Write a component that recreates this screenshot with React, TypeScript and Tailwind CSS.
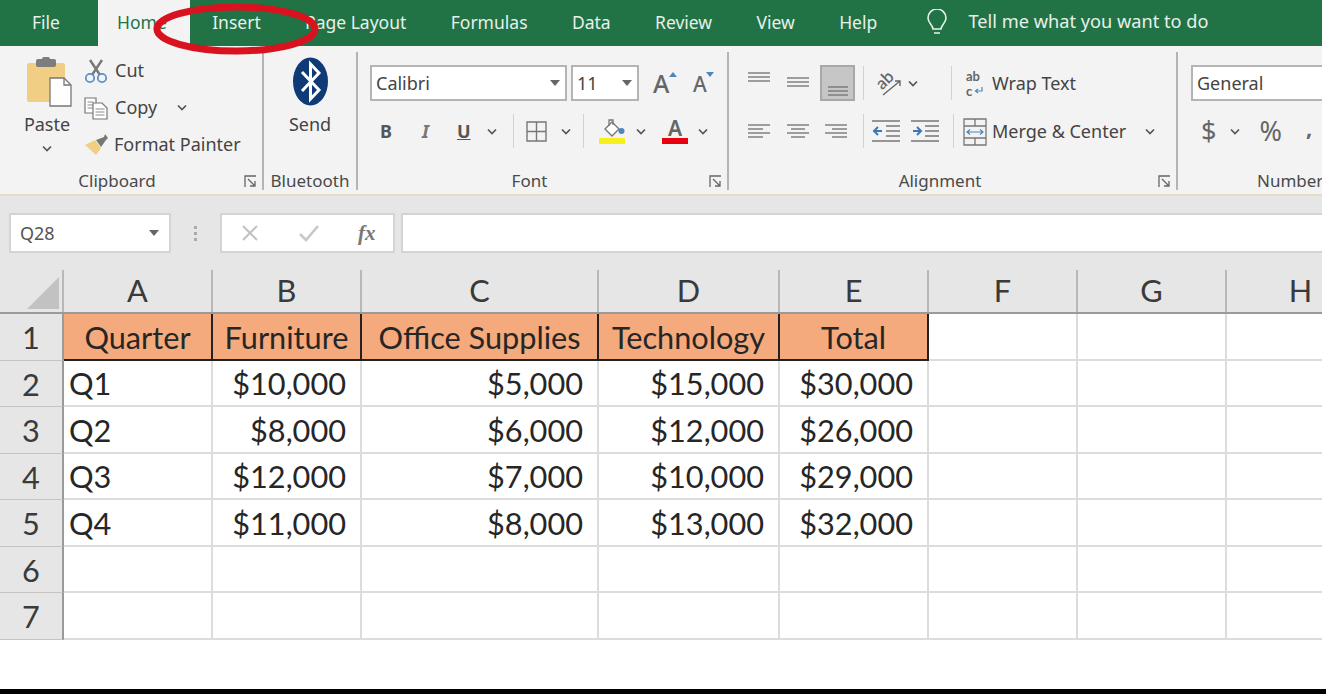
const tabs = ["Insert", "Page Layout", "Formulas", "Data", "Review", "View", "Help"];

const rows = [
  ["Q1", "$10,000", "$5,000", "$15,000", "$30,000"],
  ["Q2", "$8,000", "$6,000", "$12,000", "$26,000"],
  ["Q3", "$12,000", "$7,000", "$10,000", "$29,000"],
  ["Q4", "$11,000", "$8,000", "$13,000", "$32,000"],
];

const gridCols = "grid grid-cols-[64px_149px_149px_237px_181px_149px_149px_149px_149px]";

function Chevron({ className = "" }: { className?: string }) {
  return (
    <svg width="10" height="7" viewBox="0 0 10 7" className={className}>
      <path d="M1 1.5 5 5.5 9 1.5" fill="none" stroke="#555" strokeWidth="1.7" />
    </svg>
  );
}

function Caret() {
  return (
    <svg width="10" height="6" viewBox="0 0 10 6">
      <path d="M0 0h10L5 6z" fill="#666" />
    </svg>
  );
}

function Launcher() {
  return (
    <svg width="13" height="13" viewBox="0 0 13 13">
      <path d="M1 12V1h11M4 4l7 7M11 6v5H6" fill="none" stroke="#666" strokeWidth="1.3" />
    </svg>
  );
}

function Lines({ rows, color = "#777" }: { rows: [number, number, number][]; color?: string }) {
  return (
    <svg width="24" height="24" viewBox="0 0 24 24">
      {rows.map(([x1, x2, y]) => (
        <path key={y} d={`M${x1} ${y}H${x2}`} stroke={color} strokeWidth="1.4" />
      ))}
    </svg>
  );
}

function Group({ width, label, labelClass = "justify-center", launcher, children }: { width: string; label: string; labelClass?: string; launcher?: boolean; children: React.ReactNode }) {
  return (
    <section className={`${width} relative h-[138px] shrink-0 border-r-2 border-[#b4b4b4] flex flex-col`}>
      <div className="flex-1 min-h-0">{children}</div>
      <div className={`flex h-[24px] items-center pt-[6px] text-[17px] text-[#4a4a4a] ${labelClass}`}>{label}</div>
      {launcher && (
        <div className="absolute right-[5px] bottom-[2px] flex">
          <Launcher />
        </div>
      )}
    </section>
  );
}

function Sep() {
  return <div className="mx-[8px] h-[34px] w-px bg-[#d2d2d2]" />;
}

function ClipboardGroup() {
  return (
    <Group width="w-[264px]" label="Clipboard" labelClass="justify-center pr-[28px]" launcher>
      <div className="flex pl-[24px] pt-[5px]">
        <div className="flex w-[46px] flex-col items-center">
          <svg width="46" height="50" viewBox="0 0 46 50" className="ml-[4px]">
            <rect x="1" y="6" width="38" height="39" rx="2" fill="#f0cf85" />
            <rect x="10" y="2" width="20" height="8" rx="2" fill="#7d7d7d" />
            <rect x="16" y="0" width="8" height="5" rx="2" fill="#7d7d7d" />
            <path d="M24 21h14l7 7v21H24z" fill="#fff" stroke="#777" strokeWidth="1.3" />
            <path d="M38 21v7h7" fill="none" stroke="#777" strokeWidth="1.3" />
          </svg>
          <span className="mt-[5px] text-[18px] leading-[24px] text-[#444]">Paste</span>
          <Chevron className="mt-[9px]" />
        </div>
        <div className="-mt-[5px] ml-[14px] flex flex-col text-[18px] leading-[37px] text-[#444]">
          <div className="flex h-[37px] items-center gap-[7px]">
            <svg width="24" height="26" viewBox="0 0 24 26">
              <path d="M6 2l10 15M18 2 8 17" stroke="#777" strokeWidth="2.4" fill="none" />
              <circle cx="6" cy="20" r="4.2" fill="none" stroke="#5b8fc7" strokeWidth="1.8" />
              <circle cx="18" cy="20" r="4.2" fill="none" stroke="#5b8fc7" strokeWidth="1.8" />
            </svg>
            Cut
          </div>
          <div className="flex h-[37px] items-center gap-[6px]">
            <svg width="25" height="24" viewBox="0 0 25 24">
              <path d="M1 2h11v15H1z" fill="#fff" stroke="#777" strokeWidth="1.2" />
              <path d="M3.5 6h6M3.5 9h6M3.5 12h6" stroke="#888" />
              <path d="M9 7h9l5 5v11H9z" fill="#fff" stroke="#777" strokeWidth="1.2" />
              <path d="M11.5 13h9M11.5 16h9M11.5 19h9" stroke="#888" />
            </svg>
            Copy
            <Chevron className="ml-[14px]" />
          </div>
          <div className="flex h-[37px] items-center gap-[5px]">
            <svg width="25" height="22" viewBox="0 0 25 22">
              <path d="M1 11l10-5 6 8-5 7z" fill="#f0cf85" />
              <path d="M12 6l8-3 1-3 3 4-2 2-5 7z" fill="#777" />
            </svg>
            Format Painter
          </div>
        </div>
      </div>
    </Group>
  );
}

function BluetoothGroup() {
  return (
    <Group width="w-[94px]" label="Bluetooth">
      <div className="flex flex-col items-center pt-[5px]">
        <svg width="35" height="49" viewBox="0 0 35 49">
          <ellipse cx="17.5" cy="24.5" rx="17.5" ry="24" fill="#0e3a75" />
          <path d="M9 15l17 18-8.5 9V7L26 16 9 34" fill="none" stroke="#fff" strokeWidth="3" />
        </svg>
        <span className="mt-[6px] text-[18px] leading-[24px] text-[#444]">Send</span>
      </div>
    </Group>
  );
}

function FontGroup() {
  return (
    <Group width="w-[371px]" label="Font" labelClass="justify-center pr-[26px]" launcher>
      <div className="flex flex-col pl-[12px] pt-[13px]">
        <div className="flex h-[36px] items-center">
          <div className="flex h-[36px] w-[197px] items-center justify-between border-2 border-[#b4b4b4] bg-white pl-[4px] pr-[5px] text-[18px] text-[#444]">
            Calibri
            <Caret />
          </div>
          <div className="ml-[4px] flex h-[36px] w-[68px] items-center justify-between border-2 border-[#b4b4b4] bg-white pl-[4px] pr-[5px] text-[18px] text-[#444]">
            11
            <Caret />
          </div>
          <div className="relative ml-[14px] w-[22px] text-[25px] font-medium leading-none text-[#666]">
            A
            <svg width="8" height="5" viewBox="0 0 8 5" className="absolute -right-[2px] top-[1px]">
              <path d="M0 5h8L4 0z" fill="#4d86bd" />
            </svg>
          </div>
          <div className="relative ml-[18px] mt-[3px] w-[18px] text-[21px] font-medium leading-none text-[#666]">
            A
            <svg width="8" height="5" viewBox="0 0 8 5" className="absolute -right-[3px] -top-[2px]">
              <path d="M0 0h8L4 5z" fill="#4d86bd" />
            </svg>
          </div>
        </div>
        <div className="mt-[12px] flex h-[36px] items-center text-[#555]">
          <span className="w-[10px]" />
          <span className="w-[42px] text-[18px] font-bold">B</span>
          <span className="w-[35px] text-[18px] font-bold italic text-[#777]">I</span>
          <span className="w-[30px] text-[18px] font-bold underline">U</span>
          <Chevron />
          <div className="ml-[16px] mr-[11px] h-[34px] w-px bg-[#d2d2d2]" />
          <svg width="21" height="21" viewBox="0 0 21 21" className="ml-[1px]">
            <path d="M1 1h19v19H1zM10.5 1v19M1 10.5h19" fill="none" stroke="#777" strokeWidth="1.4" />
          </svg>
          <Chevron className="ml-[14px]" />
          <div className="ml-[12px] mr-[14px] h-[34px] w-px bg-[#d2d2d2]" />
          <div className="flex w-[28px] flex-col items-center">
            <svg width="25" height="19" viewBox="0 0 25 19">
              <path d="M5 10l7-7 7 7-7 7z" fill="#fff" stroke="#777" strokeWidth="1.4" />
              <path d="M9 7V1h4v5" fill="none" stroke="#777" strokeWidth="1.3" />
              <circle cx="21.5" cy="12" r="3" fill="#4d86bd" />
            </svg>
            <div className="h-[6px] w-[26px] bg-[#f7f01f]" />
          </div>
          <Chevron className="ml-[10px]" />
          <div className="ml-[16px] flex w-[26px] flex-col items-center">
            <span className="text-[21px] font-semibold leading-[19px] text-[#666]">A</span>
            <div className="h-[6px] w-[26px] bg-[#e8000f]" />
          </div>
          <Chevron className="ml-[10px]" />
        </div>
      </div>
    </Group>
  );
}

function AlignmentGroup() {
  return (
    <Group width="w-[449px]" label="Alignment" labelClass="justify-center pr-[25px]" launcher>
      <div className="flex flex-col pl-[18px] pt-[13px]">
        <div className="flex h-[36px] items-center">
          <div className="-mt-[10px] w-[39px]">
            <Lines rows={[[1, 23, 7], [1, 23, 11], [1, 23, 15]]} />
          </div>
          <div className="-mt-[2px] w-[34px]">
            <Lines rows={[[1, 23, 8], [1, 23, 12], [1, 23, 16]]} />
          </div>
          <div className="flex h-[36px] w-[35px] items-end justify-center border-2 border-[#a8a8a8] bg-[#c6c6c6] pb-[2px]">
            <Lines rows={[[2, 22, 14], [2, 22, 18], [2, 22, 22]]} />
          </div>
          <Sep />
          <div className="relative ml-[3px] flex h-[30px] w-[27px] items-center">
            <span className="-mt-[8px] -rotate-45 font-['Lato',sans-serif] text-[17px] font-semibold leading-none text-[#666]">ab</span>
            <svg width="20" height="18" viewBox="0 0 20 18" className="absolute bottom-[2px] right-0">
              <path d="M1 17 18 3M13 3h5v5" fill="none" stroke="#666" strokeWidth="1.400" />
            </svg>
          </div>
          <Chevron className="ml-[6px]" />
          <div className="ml-[33px] h-[34px] w-px bg-[#d2d2d2]" />
          <div className="ml-[14px] flex items-center gap-[6px] text-[18px] text-[#444]">
            <div className="flex w-[20px] flex-col font-['Lato',sans-serif] text-[13px] font-bold leading-[16px] text-[#666]">
              <span>ab</span>
              <span className="-mt-[1px] flex items-center gap-[2px]">
                c
                <svg width="9" height="8" viewBox="0 0 9 8">
                  <path d="M8 0v4H2M4 2 1.500 4 4 6" fill="none" stroke="#4d86bd" strokeWidth="1.200" />
                </svg>
              </span>
            </div>
            Wrap Text
          </div>
        </div>
        <div className="mt-[12px] flex h-[36px] items-center">
          <div className="w-[39px]">
            <Lines rows={[[1, 23, 6], [1, 16, 10], [1, 23, 14], [1, 16, 18]]} />
          </div>
          <div className="w-[38px]">
            <Lines rows={[[1, 23, 6], [5, 19, 10], [1, 23, 14], [5, 19, 18]]} />
          </div>
          <div className="w-[31px]">
            <Lines rows={[[1, 23, 6], [8, 23, 10], [1, 23, 14], [8, 23, 18]]} />
          </div>
          <div className="ml-[8px] mr-[8px] h-[34px] w-px bg-[#d2d2d2]" />
          <svg width="28" height="22" viewBox="0 0 28 22">
            <path d="M0 1h28M14 6h14M14 11h14M14 16h14M0 21h28" stroke="#777" strokeWidth="1.300" />
            <path d="M10 11H2M6 7l-4 4 4 4" fill="none" stroke="#3c78b5" strokeWidth="2" />
          </svg>
          <svg width="28" height="22" viewBox="0 0 28 22" className="ml-[11px]">
            <path d="M0 1h28M14 6h14M14 11h14M14 16h14M0 21h28" stroke="#777" strokeWidth="1.300" />
            <path d="M2 11h8M6 7l4 4-4 4" fill="none" stroke="#3c78b5" strokeWidth="2" />
          </svg>
          <div className="ml-[14px] h-[34px] w-px bg-[#d2d2d2]" />
          <div className="ml-[9px] flex items-center gap-[5px] pt-[1px] text-[18px] text-[#444]">
            <svg width="24" height="28" viewBox="0 0 24 28">
              <path d="M1 1h22v26H1zM1 8h22M1 20h22M12 1v7M12 20v7" fill="none" stroke="#777" strokeWidth="1.300" />
              <path d="M4 14h16M7 11.500 4 14l3 2.500M17 11.500l3 2.500-3 2.500" fill="none" stroke="#4d86bd" strokeWidth="1.200" />
            </svg>
            Merge &amp; Center
            <Chevron className="ml-[14px]" />
          </div>
        </div>
      </div>
    </Group>
  );
}

function NumberGroup() {
  return (
    <section className="relative h-[138px] flex-1 overflow-hidden">
      <div className="flex h-[114px] flex-col pl-[13px] pt-[13px]">
        <div className="flex h-[36px] items-center border-2 border-r-0 border-[#b4b4b4] bg-white pl-[4px] text-[18px] text-[#444]">General</div>
        <div className="mt-[12px] flex h-[36px] items-center text-[27px] text-[#666]">
          <span className="ml-[10px]">$</span>
          <Chevron className="ml-[14px]" />
          <span className="ml-[19px]">%</span>
          <span className="ml-[24px] -mt-[8px] text-[22px] font-bold">,</span>
        </div>
      </div>
      <div className="flex h-[24px] items-center pl-[79px] pt-[6px] text-[17px] text-[#4a4a4a]">Number</div>
    </section>
  );
}

function FormulaBar() {
  return (
    <div className="flex h-[57px] items-start bg-[#e6e6e6] pl-[9px] pt-[17px]">
      <div className="flex h-[40px] w-[162px] items-center justify-between border-2 border-[#d4d4d4] bg-white pl-[9px] pr-[10px] text-[18px] text-[#555]">
        Q28
        <Caret />
      </div>
      <div className="flex h-[40px] w-[49px] flex-col items-center justify-center gap-[3px] pr-[1px]">
        <div className="size-[3px] bg-[#aaa]" />
        <div className="size-[3px] bg-[#aaa]" />
        <div className="size-[3px] bg-[#aaa]" />
      </div>
      <div className="flex h-[40px] w-[175px] items-center border-2 border-[#d4d4d4] bg-white">
        <svg width="18" height="18" viewBox="0 0 18 18" className="ml-[19px]">
          <path d="M2 2l14 14M16 2 2 16" stroke="#c2c2c2" strokeWidth="2" />
        </svg>
        <svg width="22" height="18" viewBox="0 0 22 18" className="ml-[39px]">
          <path d="M2 10l6 6L20 2" fill="none" stroke="#c8c8c8" strokeWidth="2.600" />
        </svg>
        <span className="ml-[38px] font-['Liberation_Serif',serif] text-[21px] font-bold italic leading-none text-[#777]">fx</span>
      </div>
      <div className="ml-[6px] h-[40px] flex-1 border-2 border-r-0 border-[#d4d4d4] bg-white" />
    </div>
  );
}

function Sheet() {
  return (
    <div className="overflow-hidden font-['Lato',sans-serif] text-[30.700px] leading-[36px] text-[#262626]">
      <div className={`${gridCols} h-[61px] bg-[#e6e6e6] border-b-2 border-[#9a9a9a]`}>
        <div className="relative mt-[17px] border-r-2 border-[#b8b8b8]">
          <svg width="32" height="32" viewBox="0 0 32 32" className="absolute left-[27px] top-[7px]">
            <path d="M32 0v32H0z" fill="#c2c2c2" />
          </svg>
        </div>
        {["A", "B", "C", "D", "E", "F", "G", "H"].map((c) => (
          <div key={c} className="mt-[17px] flex items-center justify-center border-r-2 border-[#b8b8b8] text-[#3a3a3a]">
            {c}
          </div>
        ))}
      </div>
      <div className={`${gridCols} h-[46.500px] bg-white`}>
        <div className="flex items-center justify-center border-r-2 border-b border-r-[#9a9a9a] border-b-[#c4c4c4] bg-[#e6e6e6] pt-[3px] text-[#3a3a3a]">1</div>
        {["Quarter", "Furniture", "Office Supplies", "Technology", "Total"].map((h) => (
          <div key={h} className="flex items-center justify-center whitespace-nowrap border-r-2 border-b-2 border-[#222] bg-[#f4aa7c] pt-[3px]">
            {h}
          </div>
        ))}
        {[0, 1, 2].map((i) => (
          <div key={i} className="border-r-2 border-b-2 border-[#dcdcdc]" />
        ))}
      </div>
      {[...rows, ["", "", "", "", ""], ["", "", "", "", ""]].map((r, i) => (
        <div key={i} className={`${gridCols} h-[46.500px] bg-white`}>
          <div className="flex items-center justify-center border-r-2 border-b border-r-[#9a9a9a] border-b-[#c4c4c4] bg-[#e6e6e6] pt-[3px] text-[#3a3a3a]">{i + 2}</div>
          {r.map((v, j) => (
            <div key={j} className={`flex items-center border-r-2 border-b-2 border-[#dcdcdc] pt-[3px] ${j === 0 ? "pl-[5px]" : "justify-end pr-[14px]"}`}>
              {v}
            </div>
          ))}
          {[0, 1, 2].map((k) => (
            <div key={k} className="border-r-2 border-b-2 border-[#dcdcdc]" />
          ))}
        </div>
      ))}
    </div>
  );
}

export default function App() {
  return (
    <main className="relative flex h-[694px] flex-col overflow-hidden bg-white font-['Noto_Sans',sans-serif]">
      <div className="w-[1322px]">
        <nav className="flex h-[46px] items-center bg-[#217346] text-[17.500px] text-[#e8f0ea]">
          <div className="w-[98px] pb-[2px] pl-[32px]">File</div>
          <div className="flex h-full w-[92px] items-center bg-[#f3f3f3] pb-[2px] pl-[19px] text-[#217346]">Home</div>
          {tabs.map((t) => (
            <div key={t} className="px-[22.200px] pb-[2px]">
              {t}
            </div>
          ))}
          <svg width="22" height="28" viewBox="0 0 22 28" className="ml-[27px]">
            <path d="M7 20c0-4-5-6-5-11a9 9 0 0 1 18 0c0 5-5 7-5 11zM8 24h6" fill="none" stroke="#e8f0ea" strokeWidth="1.600" />
          </svg>
          <span className="ml-[20px] pb-[2px] text-[18.200px]">Tell me what you want to do</span>
        </nav>
        <div className="flex h-[150px] border-b-2 border-[#e6dcc6] bg-[#f3f3f3] pt-[6px]">
          <ClipboardGroup />
          <BluetoothGroup />
          <FontGroup />
          <AlignmentGroup />
          <NumberGroup />
        </div>
        <FormulaBar />
        <Sheet />
      </div>
      <div className="mt-auto h-[5px] bg-black" />
      <svg width="170" height="56" viewBox="0 0 170 56" className="absolute left-[151px] top-[1px]">
        <ellipse cx="85" cy="28" rx="79" ry="22" fill="none" stroke="#d8121f" strokeWidth="7" />
      </svg>
    </main>
  );
}
